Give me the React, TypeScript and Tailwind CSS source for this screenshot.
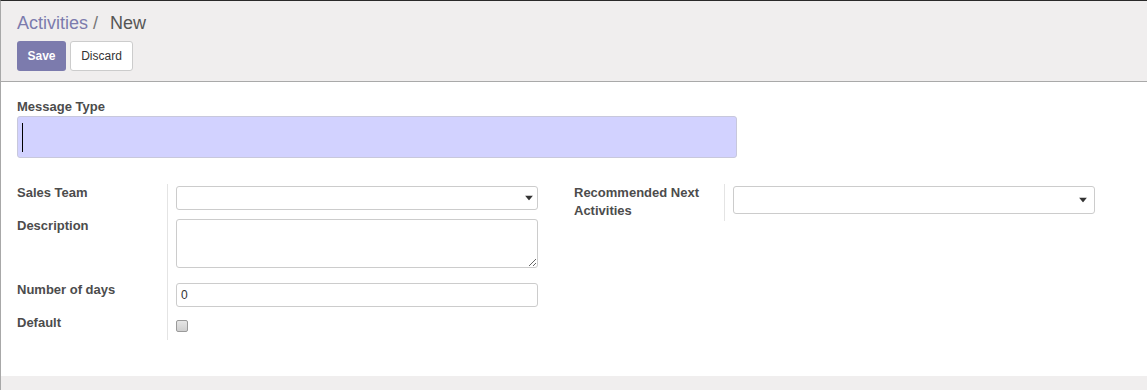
import React from "react";

const font = { fontFamily: '"Liberation Sans", Arial, sans-serif' };

function Caret({ pos }: { pos: string }) {
  return (
    <svg width="8" height="5" viewBox="0 0 8 5" className={`absolute ${pos} top-1/2 -translate-y-1/2`}>
      <path d="M0 0 L8 0 L4 5 Z" fill="#333" />
    </svg>
  );
}

function SelectBox({ h, pos }: { h: string; pos: string }) {
  return <div className={`relative w-full ${h} rounded-[3px] border border-[#ccc] bg-white`}><Caret pos={pos} /></div>;
}

function Row({ label, children, cls }: { label: React.ReactNode; children: React.ReactNode; cls: string }) {
  return (
    <div className="flex">
      <div className="w-[151px] shrink-0 border-r border-[#e4e4e4] text-[13px] leading-[18px] font-bold text-[#4c4c4c]">
        {label}
      </div>
      <div className={`flex-1 pl-2 ${cls}`}>{children}</div>
    </div>
  );
}

export default function App() {
  return (
    <div className="w-[1147px] h-[390px] bg-white border-t border-[#2a2a2a] border-l border-l-[#a8a8a8] flex flex-col overflow-hidden" style={font}>
      {/* control panel */}
      <div className="h-[81px] bg-[#f0eeee] border-b border-[#a9a9a9] pl-4 pt-[10px] shrink-0">
        <div className="flex items-baseline text-[18px] leading-[24px]">
          <span className="text-[#7c7bad]">Activities</span>
          <span className="text-[#777] pl-[5px]">/</span>
          <span className="text-[#555] pl-[12px]">New</span>
        </div>
        <div className="flex gap-1 mt-[6px]">
          <button className="h-[30px] w-[49px] rounded-[3px] bg-[#7c7bad] text-white text-[12px] font-bold">Save</button>
          <button className="h-[30px] w-[63px] rounded-[3px] bg-white border border-[#ccc] text-[#333] text-[12px]">Discard</button>
        </div>
      </div>

      {/* form sheet */}
      <div className="flex-1 bg-white pl-4 pt-[16px]">
        <div className="text-[13px] leading-[18px] font-bold text-[#4c4c4c]">Message Type</div>
        <div className="w-[720px] h-[42px] rounded-[3px] border border-[#c8c8dc] bg-[#d2d2ff] flex items-center pl-[4px]">
          <div className="w-[1px] h-[29px] bg-black" />
        </div>

        <div className="flex mt-[26px]">
          {/* left group */}
          <div className="w-[521px]">
            <Row label="Sales Team" cls="pt-[2px] pb-[9px]">
              <SelectBox h="h-[24px]" pos="right-[4px]" />
            </Row>
            <Row label={<span className="block -mt-[2px]">Description</span>} cls="pb-[15px]">
              <textarea readOnly className="block w-full h-[49px] rounded-[3px] border border-[#ccc] bg-white resize-y outline-none" />
            </Row>
            <Row label={<span className="block -mt-[2px]">Number of days</span>} cls="pb-[13px]">
              <div className="w-full h-[24px] rounded-[3px] border border-[#ccc] bg-white text-[12px] text-[#333] leading-[22px] pl-[4px]">0</div>
            </Row>
            <Row label={<span className="block -mt-[6px]">Default</span>} cls="pb-[8px]">
              <div className="w-[12px] h-[12px] rounded-[2px] border border-[#9a9a9a] bg-gradient-to-b from-[#e6e6e6] to-[#cfcfcf]" />
            </Row>
          </div>

          {/* right group */}
          <div className="w-[521px] ml-[36px] self-start">
            <Row label={<>Recommended Next<br />Activities</>} cls="pt-[2px] pb-[7px]">
              <SelectBox h="h-[28px]" pos="right-[7px]" />
            </Row>
          </div>
        </div>
      </div>

      {/* footer */}
      <div className="h-[14px] bg-[#f0eeee] shrink-0" />
    </div>
  );
}
